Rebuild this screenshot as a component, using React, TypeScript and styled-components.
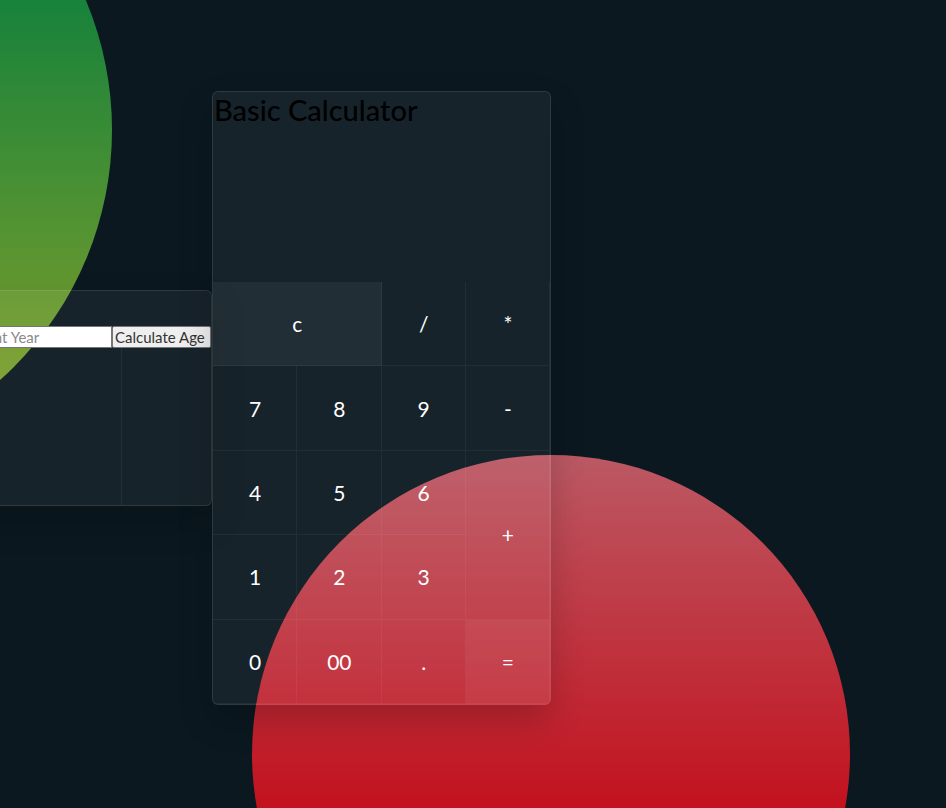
import React from "react";
import styled, { createGlobalStyle } from "styled-components";

const GlobalStyle = createGlobalStyle`
  html, body {
    margin: 0;
    padding: 0;
    background: #0b1820;
    overflow: hidden;
  }
  * { box-sizing: border-box; }
  body {
    font-family: "Lato", "Open Sans", sans-serif;
  }
`;

const Page = styled.main`
  position: relative;
  width: 100vw;
  height: 808px;
  overflow: hidden;
  display: flex;
  align-items: center;
  justify-content: flex-end;
  padding: 0 395px 12px 0;
`;

const Circle = styled.div<{ $left: number; $top: number; $size: number; $bg: string }>`
  position: absolute;
  left: ${(p) => p.$left}px;
  top: ${(p) => p.$top}px;
  width: ${(p) => p.$size}px;
  height: ${(p) => p.$size}px;
  border-radius: 50%;
  background: ${(p) => p.$bg};
  z-index: 0;
`;

const Glass = styled.section`
  position: relative;
  z-index: 1;
  flex-shrink: 0;
  background: rgba(255, 255, 255, 0.05);
  border: 1px solid rgba(255, 255, 255, 0.1);
  border-radius: 6px;
  box-shadow: 0 15px 35px rgba(0, 0, 0, 0.2);
  overflow: hidden;
`;

const AgePanel = styled(Glass)`
  width: 421px;
  height: 216px;
  display: flex;
  flex-direction: column;
`;

const AgeTitle = styled.h2`
  margin: 0;
  height: 35px;
  font-size: 28px;
  font-weight: 500;
  color: #000;
  line-height: 35px;
`;

const FormRow = styled.div`
  display: flex;
  justify-content: flex-end;
  height: 22px;
`;

const YearInput = styled.input`
  width: 160px;
  height: 22px;
  margin: 0;
  padding: 1px 4px;
  border: 1px solid #767676;
  background: #fff;
  font-family: inherit;
  font-size: 15px;
  color: #222;
  &::placeholder { color: #8a8a8a; }
`;

const AgeButton = styled.button`
  width: 100px;
  height: 22px;
  margin: 0;
  padding: 0 0 0 2px;
  border: 1px solid #767676;
  border-radius: 2px;
  background: #efefef;
  font-family: inherit;
  font-size: 15px;
  color: #333;
  text-align: left;
  white-space: nowrap;
  overflow: hidden;
`;

const ResultGrid = styled.div`
  flex: 1;
  display: grid;
  grid-template-columns: 1fr 90px;
`;

const ResultCell = styled.div<{ $divider?: boolean }>`
  border-left: ${(p) => (p.$divider ? "1px solid rgba(255,255,255,0.06)" : "none")};
`;

const CalcPanel = styled(Glass)`
  width: 339px;
  height: 614px;
  display: flex;
  flex-direction: column;
`;

const Display = styled.div`
  height: 190px;
  padding: 0 0 0 1px;
`;

const CalcTitle = styled.h2`
  margin: 0;
  font-size: 29px;
  font-weight: 500;
  line-height: 36px;
  color: #000;
`;

const Keys = styled.div`
  flex: 1;
  display: grid;
  grid-template-columns: repeat(4, 1fr);
  grid-template-rows: repeat(5, 1fr);
`;

const Key = styled.button<{ $span?: number; $rows?: number; $tint?: boolean }>`
  grid-column: span ${(p) => p.$span ?? 1};
  grid-row: span ${(p) => p.$rows ?? 1};
  margin: 0;
  padding: 0 0 0 1px;
  border: none;
  border-right: 1px solid rgba(255, 255, 255, 0.05);
  border-bottom: 1px solid rgba(255, 255, 255, 0.05);
  background: ${(p) => (p.$tint ? "rgba(255,255,255,0.05)" : "transparent")};
  color: #fff;
  font-family: inherit;
  font-size: 21px;
  font-weight: 400;
  display: flex;
  align-items: center;
  justify-content: center;
  cursor: pointer;
`;

type K = { label: string; span?: number; rows?: number; tint?: boolean };

const keys: K[] = [
  { label: "c", span: 2, tint: true },
  { label: "/" },
  { label: "*" },
  { label: "7" },
  { label: "8" },
  { label: "9" },
  { label: "-" },
  { label: "4" },
  { label: "5" },
  { label: "6" },
  { label: "+", rows: 2 },
  { label: "1" },
  { label: "2" },
  { label: "3" },
  { label: "0" },
  { label: "00" },
  { label: "." },
  { label: "=", tint: true },
];

export default function App() {
  return (
    <>
      <GlobalStyle />
      <Page>
        <Circle
          $left={-558}
          $top={-205}
          $size={670}
          $bg="linear-gradient(180deg, #007444 0%, #17823b 30.6%, #7b9e2c 87.3%, #91a429 100%)"
        />
        <Circle
          $left={252}
          $top={455}
          $size={598}
          $bg="linear-gradient(180deg, #ba5964 0%, #bc525d 6%, #c2121e 59%, #c40010 100%)"
        />
        <AgePanel>
          <AgeTitle>Age Calculator</AgeTitle>
          <FormRow>
            <YearInput type="text" placeholder="Birth Year" />
            <YearInput type="text" placeholder="Current Year" />
            <AgeButton>Calculate Age</AgeButton>
          </FormRow>
          <ResultGrid>
            <ResultCell />
            <ResultCell $divider />
          </ResultGrid>
        </AgePanel>
        <CalcPanel>
          <Display>
            <CalcTitle>Basic Calculator</CalcTitle>
          </Display>
          <Keys>
            {keys.map((k) => (
              <Key key={k.label} $span={k.span} $rows={k.rows} $tint={k.tint}>
                {k.label}
              </Key>
            ))}
          </Keys>
        </CalcPanel>
      </Page>
    </>
  );
}
